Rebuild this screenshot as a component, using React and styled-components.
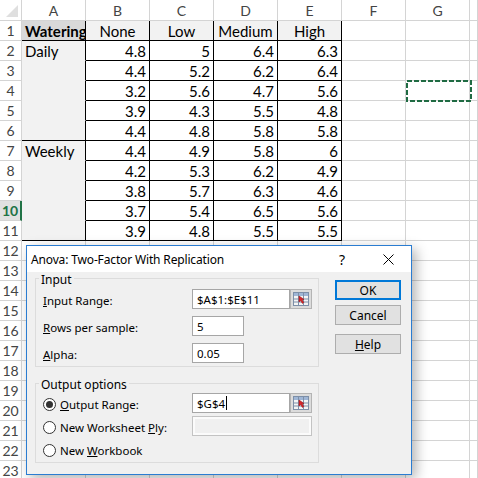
import React from 'react';
import styled, { createGlobalStyle } from 'styled-components';

const GlobalStyle = createGlobalStyle`
  html, body {
    margin: 0;
    padding: 0;
    background: #ffffff;
    overflow: hidden;
  }
`;

const COLS = ['A', 'B', 'C', 'D', 'E', 'F', 'G'];

const DATA = [
  ['Watering', 'None', 'Low', 'Medium', 'High'],
  ['Daily', '4.8', '5', '6.4', '6.3'],
  ['', '4.4', '5.2', '6.2', '6.4'],
  ['', '3.2', '5.6', '4.7', '5.6'],
  ['', '3.9', '4.3', '5.5', '4.8'],
  ['', '4.4', '4.8', '5.8', '5.8'],
  ['Weekly', '4.4', '4.9', '5.8', '6'],
  ['', '4.2', '5.3', '6.2', '4.9'],
  ['', '3.8', '5.7', '6.3', '4.6'],
  ['', '3.7', '5.4', '6.5', '5.6'],
  ['', '3.9', '4.8', '5.5', '5.5'],
];

const ROW_COUNT = 23;
const ACTIVE_ROW = 10;

const Sheet = styled.div`
  position: relative;
  width: 478px;
  height: 478px;
  overflow: hidden;
  display: grid;
  grid-template-columns: 22px repeat(7, 64px) 1fr;
  grid-template-rows: 21px repeat(${ROW_COUNT}, 20px);
  font-family: Lato, "Liberation Sans", sans-serif;
  font-size: 15px;
  color: #000;
`;

const Corner = styled.div`
  position: relative;
  box-sizing: border-box;
  border-right: 1px solid #d4d4d4;
  border-bottom: 1px solid #d4d4d4;
  &::after {
    content: '';
    position: absolute;
    right: 3px;
    bottom: 3px;
    width: 12px;
    height: 12px;
    background: #dfdfdf;
    clip-path: polygon(100% 0, 100% 100%, 0 100%);
  }
`;

const ColHead = styled.div`
  box-sizing: border-box;
  border-right: 1px solid #d4d4d4;
  border-bottom: 1px solid #d4d4d4;
  display: flex;
  align-items: center;
  justify-content: center;
  color: #444;
  font-size: 14px;
`;

const RowHead = styled.div`
  box-sizing: border-box;
  border-right: ${p => (p.$active ? '2px solid #217346' : '1px solid #d4d4d4')};
  border-bottom: 1px solid #d4d4d4;
  background: ${p => (p.$active ? '#e1e1e1' : '#ffffff')};
  color: ${p => (p.$active ? '#217346' : '#444')};
  font-weight: ${p => (p.$active ? 700 : 400)};
  display: flex;
  align-items: center;
  justify-content: center;
  font-size: 14px;
`;

const Cell = styled.div`
  box-sizing: border-box;
  border-right: 1px solid ${p => (p.$boxed ? '#000' : '#d4d4d4')};
  border-bottom: 1px solid ${p => (p.$underline ? '#000' : p.$fill ? p.$fill : '#d4d4d4')};
  background: ${p => p.$fill || 'transparent'};
  display: flex;
  align-items: center;
  justify-content: ${p => p.$align || 'flex-start'};
  padding: 1px 3px 0 3px;
  font-weight: ${p => (p.$bold ? 700 : 400)};
  white-space: nowrap;
  overflow: hidden;
`;

const Marquee = styled.svg`
  position: absolute;
  left: 406px;
  top: 80px;
  width: 66px;
  height: 22px;
`;

const Dialog = styled.div`
  position: absolute;
  left: 26px;
  top: 245px;
  width: 386px;
  height: 230px;
  box-sizing: border-box;
  border: 1px solid #2a7cd1;
  background: #f0f0f0;
  box-shadow: 4px 4px 12px rgba(0, 0, 0, 0.3);
  display: flex;
  flex-direction: column;
  font-family: "Noto Sans", "Open Sans", sans-serif;
  font-size: 11.5px;
  color: #000;
`;

const TitleBar = styled.div`
  height: 26px;
  background: #ffffff;
  display: flex;
  align-items: center;
  padding-left: 4px;
`;

const Title = styled.div`
  flex: 1;
  font-size: 12px;
  letter-spacing: -0.15px;
`;

const TitleButton = styled.div`
  width: 46px;
  height: 26px;
  display: flex;
  align-items: center;
  justify-content: center;
  font-size: 14px;
`;

const Body = styled.div`
  flex: 1;
  display: flex;
  padding: 6px 10px 0 8px;
  gap: 16px;
`;

const LeftColumn = styled.div`
  width: 284px;
  display: flex;
  flex-direction: column;
  gap: 16px;
`;

const Group = styled.div`
  position: relative;
  box-sizing: border-box;
  height: ${p => p.$height}px;
  border: 1px solid #dcdcdc;
  padding: ${p => p.$top}px 0 0 7px;
  display: flex;
  flex-direction: column;
  gap: ${p => p.$gap}px;
`;

const Legend = styled.span`
  position: absolute;
  left: 3px;
  top: -6px;
  padding: 0 2px;
  background: #f0f0f0;
  line-height: 14px;
  font-size: 12px;
`;

const FieldRow = styled.div`
  height: 20px;
  display: flex;
  align-items: center;
`;

const Label = styled.div`
  width: 149px;
  display: flex;
  align-items: center;
  gap: 4px;
  padding-top: 2px;
`;

const TextBox = styled.div`
  box-sizing: border-box;
  width: ${p => p.$width}px;
  height: 20px;
  border: 1px solid ${p => (p.$disabled ? '#c3c3c3' : '#a6a6a6')};
  background: ${p => (p.$disabled ? '#f0f0f0' : '#ffffff')};
  box-shadow: ${p => (p.$disabled ? 'inset 0 0 0 2px #fbfbfb' : 'none')};
  padding-left: 4px;
  display: flex;
  align-items: center;
`;

const Caret = styled.span`
  display: inline-block;
  width: 1px;
  height: 14px;
  background: #000;
  margin-left: 1px;
`;

const RangeButton = styled.div`
  box-sizing: border-box;
  width: 22px;
  height: 20px;
  background: #dcdcdc;
  border: 1px solid #b4b4b4;
  display: flex;
  align-items: center;
  justify-content: center;
`;

const Radio = styled.span`
  box-sizing: border-box;
  width: 13px;
  height: 13px;
  border-radius: 50%;
  border: 1px solid #333;
  background: #fff;
  display: flex;
  align-items: center;
  justify-content: center;
  &::after {
    content: '';
    width: 7px;
    height: 7px;
    border-radius: 50%;
    background: ${p => (p.$checked ? '#333' : 'transparent')};
  }
`;

const ButtonColumn = styled.div`
  width: 66px;
  padding-top: 2px;
  display: flex;
  flex-direction: column;
`;

const Button = styled.div`
  box-sizing: border-box;
  height: 20px;
  margin-bottom: ${p => p.$after || 0}px;
  background: #e1e1e1;
  border: ${p => (p.$default ? '2px solid #0078d7' : '1px solid #adadad')};
  display: flex;
  align-items: center;
  justify-content: center;
  font-size: 12px;
`;

function RangeIcon() {
  return (
    <svg width="16" height="14" viewBox="0 0 16 14">
      <rect x="0.5" y="0.5" width="15" height="13" fill="#f4f4f4" stroke="#7d8fa8" />
      <rect x="1" y="1" width="14" height="3" fill="#9fb6d6" />
      <line x1="1" y1="7" x2="15" y2="7" stroke="#7d8fa8" />
      <line x1="1" y1="10" x2="15" y2="10" stroke="#7d8fa8" />
      <line x1="5.5" y1="1" x2="5.5" y2="13" stroke="#7d8fa8" />
      <line x1="10.5" y1="1" x2="10.5" y2="13" stroke="#7d8fa8" />
      <path d="M6 4 L6 10 L7.6 8.6 L9.4 11.4 L10.8 10.4 L9 7.8 L11 7.4 Z" fill="#d8262b" stroke="#9c1518" strokeWidth="0.6" />
    </svg>
  );
}

function CloseIcon() {
  return (
    <svg width="11" height="11" viewBox="0 0 11 11">
      <path d="M0.5 0.5 L10.5 10.5 M10.5 0.5 L0.5 10.5" stroke="#000" strokeWidth="1" />
    </svg>
  );
}

function SheetGrid() {
  const cells = [];
  cells.push(<Corner key="corner" />);
  COLS.forEach(c => cells.push(<ColHead key={`h${c}`}>{c}</ColHead>));
  cells.push(<ColHead key="hH" />);

  for (let r = 1; r <= ROW_COUNT; r++) {
    cells.push(
      <RowHead key={`r${r}`} $active={r === ACTIVE_ROW}>
        {r}
      </RowHead>
    );
    const row = DATA[r - 1];
    COLS.forEach((c, ci) => {
      const inTable = row && ci < 5;
      if (!inTable) {
        cells.push(<Cell key={`${c}${r}`} />);
        return;
      }
      const value = row[ci];
      let fill;
      if (ci === 0) fill = r === 1 ? '#d9d9d9' : '#f2f2f2';
      else if (r === 1) fill = '#f2f2f2';
      const underline = ci > 0 || r === 1 || r === 6 || r === 11;
      cells.push(
        <Cell
          key={`${c}${r}`}
          $boxed
          $underline={underline}
          $fill={fill}
          $bold={r === 1 && ci === 0}
          $align={r === 1 && ci > 0 ? 'center' : ci === 0 ? 'flex-start' : 'flex-end'}
        >
          {value}
        </Cell>
      );
    });
    cells.push(<Cell key={`H${r}`} />);
  }
  return cells;
}

export default function App() {
  return (
    <>
      <GlobalStyle />
      <Sheet>
        <SheetGrid />

        <Marquee viewBox="0 0 66 22">
          <rect x="1" y="1" width="64" height="20" fill="none" stroke="#1f6b43" strokeWidth="2" strokeDasharray="5 2" />
        </Marquee>

        <Dialog>
          <TitleBar>
            <Title>Anova: Two-Factor With Replication</Title>
            <TitleButton>?</TitleButton>
            <TitleButton>
              <CloseIcon />
            </TitleButton>
          </TitleBar>

          <Body>
            <LeftColumn>
              <Group $height={89} $top={10} $gap={7}>
                <Legend>Input</Legend>
                <FieldRow>
                  <Label>
                    <span><u>I</u>nput Range:</span>
                  </Label>
                  <TextBox $width={98}>$A$1:$E$11</TextBox>
                  <RangeButton>
                    <RangeIcon />
                  </RangeButton>
                </FieldRow>
                <FieldRow>
                  <Label>
                    <span><u>R</u>ows per sample:</span>
                  </Label>
                  <TextBox $width={52}>5</TextBox>
                </FieldRow>
                <FieldRow>
                  <Label>
                    <span><u>A</u>lpha:</span>
                  </Label>
                  <TextBox $width={52}>0.05</TextBox>
                </FieldRow>
              </Group>

              <Group $height={80} $top={9} $gap={3}>
                <Legend>Output options</Legend>
                <FieldRow>
                  <Label>
                    <Radio $checked />
                    <span><u>O</u>utput Range:</span>
                  </Label>
                  <TextBox $width={98}>
                    $G$4<Caret />
                  </TextBox>
                  <RangeButton>
                    <RangeIcon />
                  </RangeButton>
                </FieldRow>
                <FieldRow>
                  <Label>
                    <Radio />
                    <span>New Worksheet <u>P</u>ly:</span>
                  </Label>
                  <TextBox $width={120} $disabled />
                </FieldRow>
                <FieldRow>
                  <Label>
                    <Radio />
                    <span>New <u>W</u>orkbook</span>
                  </Label>
                </FieldRow>
              </Group>
            </LeftColumn>

            <ButtonColumn>
              <Button $default $after={5}>OK</Button>
              <Button $after={9}>Cancel</Button>
              <Button><span><u>H</u>elp</span></Button>
            </ButtonColumn>
          </Body>
        </Dialog>
      </Sheet>
    </>
  );
}
